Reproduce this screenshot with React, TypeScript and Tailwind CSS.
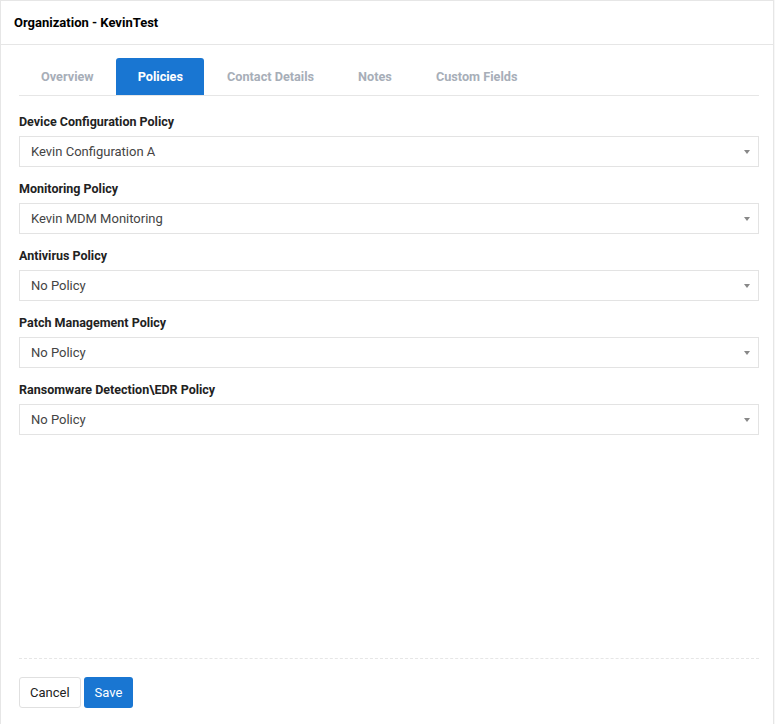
import React, { useState } from "react";

const tabs = ["Overview", "Policies", "Contact Details", "Notes", "Custom Fields"];

const policies = [
  { label: "Device Configuration Policy", value: "Kevin Configuration A" },
  { label: "Monitoring Policy", value: "Kevin MDM Monitoring" },
  { label: "Antivirus Policy", value: "No Policy" },
  { label: "Patch Management Policy", value: "No Policy" },
  { label: "Ransomware Detection\\EDR Policy", value: "No Policy" },
];

const PolicySelect = ({ label, value }: { label: string; value: string }) => (
  <div className="flex flex-col">
    <label className="text-[12.5px] font-bold text-[#222] leading-[12px] mb-[8px]">{label}</label>
    <div className="h-[31px] border border-[#e3e3e3] bg-white flex items-center justify-between pl-[11px] pr-[8px]">
      <span className="text-[13px] text-[#444]">{value}</span>
      <span className="w-0 h-0 border-l-[3px] border-r-[3px] border-t-[4px] border-l-transparent border-r-transparent border-t-[#888]" />
    </div>
  </div>
);

const App = () => {
  const [active, setActive] = useState("Policies");

  return (
    <div className="w-[775px] h-[724px] bg-[#f7f7f7] overflow-hidden" style={{ fontFamily: "Roboto, 'Liberation Sans', sans-serif" }}>
      <div className="w-[774px] h-[740px] bg-white border border-[#e6e6e6] flex flex-col">
        <div className="h-[44px] border-b border-[#e6e6e6] flex items-center px-[13px]">
          <h1 className="text-[13px] font-bold text-black">Organization - KevinTest</h1>
        </div>

        <div className="flex-1 flex flex-col pl-[18px] pr-[14px]">
          <div className="mt-[13px] flex border-b border-[#e6e6e6]">
            {tabs.map((t) => (
              <button
                key={t}
                onClick={() => setActive(t)}
                className={
                  t === active
                    ? "h-[37px] pl-[22px] pr-[21px] mr-[1px] text-[12.7px] font-bold bg-[#1976d2] text-white rounded-t-[3px]"
                    : "h-[37px] pl-[22px] pr-[21px] mr-[1px] text-[12.7px] font-bold text-[#a7aeb8]"
                }
              >
                {t}
              </button>
            ))}
          </div>

          <div className="mt-[20px] flex flex-col gap-[16px]">
            {policies.map((p) => (
              <PolicySelect key={p.label} label={p.label} value={p.value} />
            ))}
          </div>

          <div className="mt-auto mb-[15px] border-t border-dashed border-[#e6e6e6] pt-[18px] pb-[16px] flex gap-[3px]">
            <button className="h-[31px] px-[10px] border border-[#e0e0e0] rounded-[3px] bg-white text-[13px] text-[#222]">
              Cancel
            </button>
            <button className="h-[31px] px-[11px] rounded-[3px] bg-[#1976d2] text-[13px] text-white">
              Save
            </button>
          </div>
        </div>
      </div>
    </div>
  );
};

export default App;
